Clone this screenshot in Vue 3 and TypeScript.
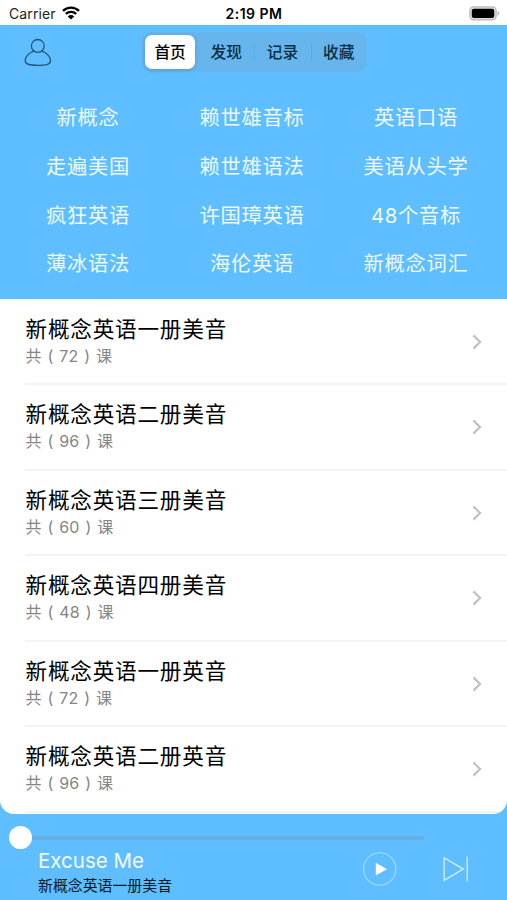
<script setup lang="ts">
import { ref } from 'vue'

interface Course { title: string; count: number }

const tabs: string[] = ['首页', '发现', '记录', '收藏']
const active = ref(0)

const categories: string[] = [
  '新概念', '赖世雄音标', '英语口语',
  '走遍美国', '赖世雄语法', '美语从头学',
  '疯狂英语', '许国璋英语', '48个音标',
  '薄冰语法', '海伦英语', '新概念词汇',
]

const courses: Course[] = [
  { title: '新概念英语一册美音', count: 72 },
  { title: '新概念英语二册美音', count: 96 },
  { title: '新概念英语三册美音', count: 60 },
  { title: '新概念英语四册美音', count: 48 },
  { title: '新概念英语一册英音', count: 72 },
  { title: '新概念英语二册英音', count: 96 },
]
</script>

<template>
  <div class="app">
    <div class="status">
      <div class="carrier">
        <span>Carrier</span>
        <svg class="wifi" width="18" height="14" viewBox="0 0 18 14">
          <path d="M1 4.9a11.6 11.6 0 0 1 16 0M3.8 7.9a7.5 7.5 0 0 1 10.4 0" fill="none" stroke="#000" stroke-width="2.3" />
          <path d="M9 13.5L5.8 10.4a4.6 4.6 0 0 1 6.4 0z" fill="#000" />
        </svg>
      </div>
      <span class="time">2:19 PM</span>
      <svg class="battery" width="31" height="15" viewBox="0 0 31 15">
        <rect x="0.9" y="0.9" width="26.2" height="13" rx="3.8" fill="#ddd" stroke="#b8b8b8" stroke-width="1.3" />
        <rect x="2.8" y="2.7" width="22.4" height="9.4" rx="2" fill="#000" />
        <path d="M28.6 5c2 .7 2 4 0 4.7z" fill="#aaa" />
      </svg>
    </div>

    <header class="header">
      <nav class="bar">
        <svg class="user" width="28" height="29" viewBox="0 0 28 29" fill="none" stroke="#245579" stroke-width="1.3">
          <circle cx="13.8" cy="7.9" r="6.4" />
          <path d="M10.2 13.2C5.2 14.5 1.2 18.6 1.2 22.8c0 3.6 4 4.5 12.8 4.5s12.5-.9 12.5-4.5c0-4.2-4-8.3-9-9.6" />
        </svg>
        <div class="segments">
          <button
            v-for="(tab, i) in tabs"
            :key="tab"
            class="segment"
            :class="{ active: i === active, divided: i > active + 1 }"
            @click="active = i"
          >{{ tab }}</button>
        </div>
      </nav>
      <div class="categories">
        <span v-for="c in categories" :key="c" class="category">{{ c }}</span>
      </div>
    </header>

    <main class="list-wrap">
      <ul class="list">
        <li v-for="c in courses" :key="c.title" class="row">
          <div class="info">
            <span class="title">{{ c.title }}</span>
            <span class="count">共 ( {{ c.count }} ) 课</span>
          </div>
          <svg class="chevron" width="10" height="16" viewBox="0 0 10 16" fill="none" stroke="#c1c1c4" stroke-width="2.2">
            <path d="M1.4 1.4L8 8l-6.6 6.6" />
          </svg>
        </li>
      </ul>
    </main>

    <footer class="player">
      <div class="slider">
        <span class="knob"></span>
        <span class="track"></span>
      </div>
      <div class="controls">
        <div class="song">
          <span class="name">Excuse Me</span>
          <span class="album">新概念英语一册美音</span>
        </div>
        <svg class="play" width="34" height="34" viewBox="0 0 34 34">
          <circle cx="16.7" cy="17" r="16.2" fill="none" stroke="#a5dbff" stroke-width="1.1" />
          <path d="M12.8 10.8v12.8L24 17.2z" fill="#fff" />
        </svg>
        <svg class="next" width="26" height="26" viewBox="0 0 26 26" fill="none" stroke="#d5f0ff" stroke-width="1.3">
          <path d="M1.1 1.8v22.6L20.3 13.1zM24.2 .6v24.8" />
        </svg>
      </div>
    </footer>
  </div>
</template>

<style>
body {
  margin: 0;
}
</style>

<style scoped>
.app {
  box-sizing: border-box;
  width: 507px;
  height: 900px;
  overflow: hidden;
  display: flex;
  flex-direction: column;
  background: #5ebeff;
  font-family: Inter, "Noto Sans CJK SC", sans-serif;
  color: #000;
}
.status {
  height: 25px;
  flex: none;
  display: grid;
  grid-template-columns: 1fr auto 1fr;
  align-items: center;
  padding: 2px 7px 0 9px;
  box-sizing: border-box;
  background: #fff;
  font-size: 14px;
}
.carrier {
  display: flex;
  align-items: center;
  gap: 6px;
  color: #222;
  letter-spacing: 0.1px;
}
.wifi {
  margin-top: -2px;
}
.time {
  font-weight: 600;
  font-size: 14px;
  letter-spacing: 0.5px;
  margin-right: 1px;
}
.battery {
  justify-self: end;
  margin-top: -1px;
}
.header {
  height: 274px;
  flex: none;
}
.bar {
  display: flex;
  padding: 7px 0 0 24px;
  height: 67px;
  box-sizing: border-box;
}
.user {
  margin-top: 6px;
}
.segments {
  display: flex;
  margin-left: 90px;
  height: 40px;
  border-radius: 10px;
  background: #66b5ec;
}
.segment {
  width: 56.2px;
  padding: 1px 0 0;
  border: 0;
  background: linear-gradient(#5eaee4, #5eaee4) left center / 0 20px no-repeat;
  font: 500 15.7px/40px Inter, "Noto Sans CJK SC", sans-serif;
  color: #0b2c42;
}
.segment.divided {
  background-size: 1px 20px;
}
.segment.active {
  width: 50.2px;
  margin: 3px;
  line-height: 34px;
  border-radius: 7px;
  background: #fff;
  color: #000;
  box-shadow: 0 1px 4px rgba(0, 40, 80, 0.2);
}
.categories {
  display: grid;
  grid-template-columns: repeat(3, 164px);
  grid-auto-rows: 48.8px;
  padding: 2px 0 0 6px;
}
.category {
  text-align: center;
  font-size: 20.3px;
  line-height: 48px;
  letter-spacing: 0.7px;
  color: #effaff;
}
.list-wrap {
  height: 515px;
  flex: none;
  overflow: hidden;
  background: #fff;
  border-radius: 0 0 14px 14px;
}
.list {
  margin: 0;
  padding: 0.5px 0 0 25px;
  list-style: none;
}
.row {
  height: 85.5px;
  box-sizing: border-box;
  display: flex;
  align-items: center;
  justify-content: space-between;
  padding-right: 25px;
  border-bottom: 2px solid #f4f4f4;
}
.info {
  display: flex;
  flex-direction: column;
  margin-top: -1.5px;
}
.title {
  font-size: 21.6px;
  letter-spacing: 0.8px;
  line-height: 30px;
  padding-left: 0.5px;
}
.count {
  font-size: 16px;
  line-height: 24px;
  letter-spacing: 0.1px;
  word-spacing: 1.3px;
  padding-left: 0.5px;
  color: #858585;
}
.chevron {
  margin-top: 1px;
}
.player {
  flex: 1;
}
.slider {
  display: flex;
  align-items: center;
  margin: 12px 0 0 9px;
}
.knob {
  width: 23px;
  height: 23px;
  border-radius: 50%;
  background: #fff;
}
.track {
  width: 392px;
  height: 4px;
  border-radius: 0 1px 1px 0;
  background: #66afe5;
}
.controls {
  display: flex;
  padding-left: 38px;
}
.song {
  width: 325px;
  display: flex;
  flex-direction: column;
}
.name {
  font-size: 20.5px;
  line-height: 24px;
  color: #f5fcff;
}
.album {
  font-size: 14.9px;
  line-height: 26px;
  color: #06192a;
}
.play {
  margin-top: 3px;
}
.next {
  margin: 7px 0 0 46px;
}
</style>
